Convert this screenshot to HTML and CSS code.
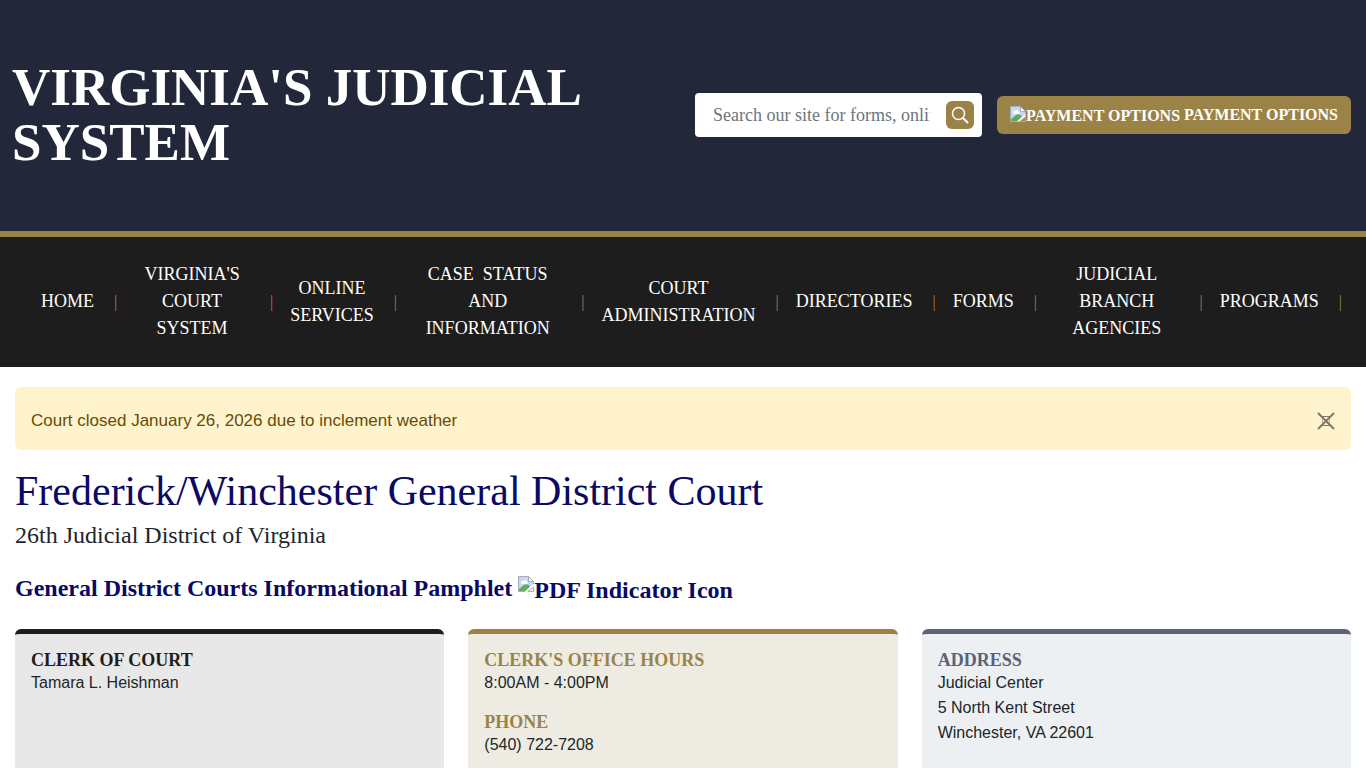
FILE: index.html
```html
<!DOCTYPE html>
<html lang="en">
  <head>
    <meta charset="utf-8">
    <meta name="viewport" content="width=device-width, initial-scale=1">
    <title>Frederick/Winchester General District Court</title>
    <link rel="stylesheet" href="styles.css">
  </head>
  <body>
    <!-- Shared icon for images that are not available -->
    <svg class="symbols" width="0" height="0" aria-hidden="true">
      <symbol id="missing-image" viewBox="0 0 16 16">
        <path d="M.5.5h10l5 5v3l-8 7h-7z" fill="#c3d9f7" />
        <path d="M3 6.5a1.6 1.6 0 0 1 2-1.6 2 2 0 0 1 3.6.6 1.3 1.3 0 0 1 .4 2.5H4.300A1.5 1.5 0 0 1 3 6.5z" fill="#fff" />
        <path d="M1 15v-2l5-4c2-1.5 4-1 6 1.5L7.5 15z" fill="#5fae5a" />
        <path d="M15.5 8 7 15.5h2.5l6-5z" fill="#fff" />
        <path d="M10.5.5v5h5z" fill="#fff" />
        <path d="M7 15.5H.5V.5h10l5 5V8M10.5.5v5h5M10 15.5h5.500v-4.500z" fill="none" stroke="#a9adb3" />
      </symbol>
    </svg>

    <header class="site-header">
      <div class="site-title">Virginia's Judicial System</div>
      <form class="search" role="search">
        <input type="text" class="search-input" aria-label="Search our site" placeholder="Search our site for forms, online services and more">
        <button type="submit" class="search-button" aria-label="Search">
          <svg width="18" height="18" viewBox="0 0 18 18" fill="none" stroke="#fff" stroke-width="1.5">
            <circle cx="7.5" cy="7.5" r="6" />
            <path d="M12 12l5 5" stroke-width="2" />
          </svg>
        </button>
      </form>
      <a href="#" class="payment-button"><span class="missing-image"><svg width="16" height="16"><use href="#missing-image" /></svg>Payment Options</span> Payment Options</a>
    </header>

    <nav class="main-nav">
      <ul>
        <li><a href="#">Home</a></li>
        <li><a href="#">Virginia's Court System</a></li>
        <li><a href="#">Online Services</a></li>
        <li><a href="#">Case&nbsp; Status and Information</a></li>
        <li><a href="#">Court Administration</a></li>
        <li><a href="#">Directories</a></li>
        <li><a href="#">Forms</a></li>
        <li><a href="#">Judicial Branch Agencies</a></li>
        <li><a href="#">Programs</a></li>
      </ul>
    </nav>

    <main class="content">
      <div class="alert" role="alert">
        <span>Court closed January 26, 2026 due to inclement weather</span>
        <button type="button" class="alert-close" aria-label="Close">
          <svg width="18" height="18" viewBox="0 0 18 18" fill="none" stroke="#000">
            <path d="M1 1l16 16M17 1L1 17" stroke-width="2" />
            <path d="M4 4.500h10M4 13.500h10" />
            <path d="M5.500 4v10M12.500 4v10" stroke-opacity="0.5" />
          </svg>
        </button>
      </div>

      <h1>Frederick/Winchester General District Court</h1>
      <p class="district">26th Judicial District of Virginia</p>
      <h2><a href="#">General District Courts Informational Pamphlet <span class="missing-image"><svg width="16" height="16"><use href="#missing-image" /></svg>PDF Indicator Icon</span></a></h2>

      <div class="cards">
        <section class="card card-clerk">
          <h3>Clerk of Court</h3>
          <p>Tamara L. Heishman</p>
        </section>
        <section class="card card-hours">
          <h3>Clerk's Office Hours</h3>
          <p>8:00AM - 4:00PM</p>
          <h3>Phone</h3>
          <p>(540) 722-7208</p>
        </section>
        <section class="card card-address">
          <h3>Address</h3>
          <p>Judicial Center<br>5 North Kent Street<br>Winchester, VA 22601</p>
        </section>
      </div>
    </main>
  </body>
</html>
```

FILE: styles.css
```css
:root {
  --gold: #9b8347;
  --navy: #22283a;
  --ink: #1d1d1d;
  --serif: "Liberation Serif", "Times New Roman", serif;
  --sans: "Liberation Sans", Arial, sans-serif;
}

* {
  margin: 0;
  padding: 0;
  box-sizing: border-box;
}

body {
  display: flex;
  flex-direction: column;
  min-height: 100vh;
  font-family: var(--sans);
  font-size: 16px;
  line-height: 25px;
  color: #212529;
  background: #fff;
}

a {
  color: inherit;
  text-decoration: none;
}

.symbols {
  position: absolute;
}

/* Icon plus alt text */
.missing-image {
  display: inline-block;
  vertical-align: middle;
}

.missing-image svg {
  vertical-align: top;
}

/* Header */
.site-header {
  display: flex;
  align-items: center;
  gap: 15px;
  padding: 60px 15px 61px 12px;
  background: var(--navy);
  border-bottom: 6px solid var(--gold);
}

.site-title {
  flex: 1;
  font: bold 53px/55px var(--serif);
  text-transform: uppercase;
  color: #fff;
}

.search {
  display: flex;
  align-items: center;
  gap: 16px;
  width: 287px;
  height: 44px;
  padding: 0 8px 0 18px;
  background: #fff;
  border-radius: 4px;
}

.search-input {
  flex: 1;
  min-width: 0;
  border: none;
  outline: none;
  font: 18px/27px var(--serif);
}

.search-input::placeholder {
  color: #6c757d;
}

.search-button {
  display: flex;
  align-items: center;
  justify-content: center;
  width: 28px;
  height: 28px;
  background: var(--gold);
  border: none;
  border-radius: 6px;
  cursor: pointer;
}

.payment-button {
  padding: 9px 13px 8px;
  background: var(--gold);
  border-radius: 6px;
  font: bold 16px/20px var(--serif);
  text-transform: uppercase;
  white-space: nowrap;
  color: #fff;
}

/* Navigation */
.main-nav {
  padding: 24px 24px 25px;
  background: var(--ink);
}

.main-nav ul {
  display: flex;
  align-items: center;
  list-style: none;
}

.main-nav li {
  display: flex;
  flex: 0 1 auto;
  align-items: center;
}

.main-nav li::after {
  content: "|";
  font: 16px/20px var(--serif);
  color: var(--gold);
}

.main-nav a {
  padding: 0 20px 0 17px;
  font: 18px/27px var(--serif);
  text-align: center;
  text-transform: uppercase;
  color: #fff;
}

/* Content */
.content {
  display: flex;
  flex: 1;
  flex-direction: column;
  padding: 20px 15px 0;
}

.alert {
  display: flex;
  align-items: center;
  justify-content: space-between;
  padding: 18px 16px 14px;
  margin-bottom: 16px;
  background: #fff3cd;
  border-radius: 6px;
  font-size: 17px;
  line-height: 31px;
  color: #664d03;
}

.alert-close {
  display: flex;
  background: none;
  border: none;
  opacity: 0.5;
  cursor: pointer;
}

h1 {
  font: 42px/50px var(--serif);
  color: #0a0a64;
}

.district {
  margin-bottom: 20px;
  font: 24px/38px var(--serif);
}

h2 {
  margin-bottom: 24px;
  font: bold 24px/29px var(--serif);
  color: #0a0a64;
}

.cards {
  display: grid;
  flex: 1;
  grid-template-columns: repeat(3, 1fr);
  gap: 24px;
}

.card {
  padding: 16px 16px 0;
  border-top: 5px solid var(--ink);
  border-radius: 6px 6px 0 0;
  background: #e8e8e8;
}

.card h3 {
  font: bold 18px/20px var(--serif);
  text-transform: uppercase;
  color: var(--ink);
}

.card p {
  margin-bottom: 17px;
}

.card-hours {
  background: #eeece2;
  border-color: var(--gold);
}

.card-hours h3 {
  color: var(--gold);
}

.card-address {
  background: #ecf0f3;
  border-color: #5e6177;
}

.card-address h3 {
  color: #5e6177;
}
```
